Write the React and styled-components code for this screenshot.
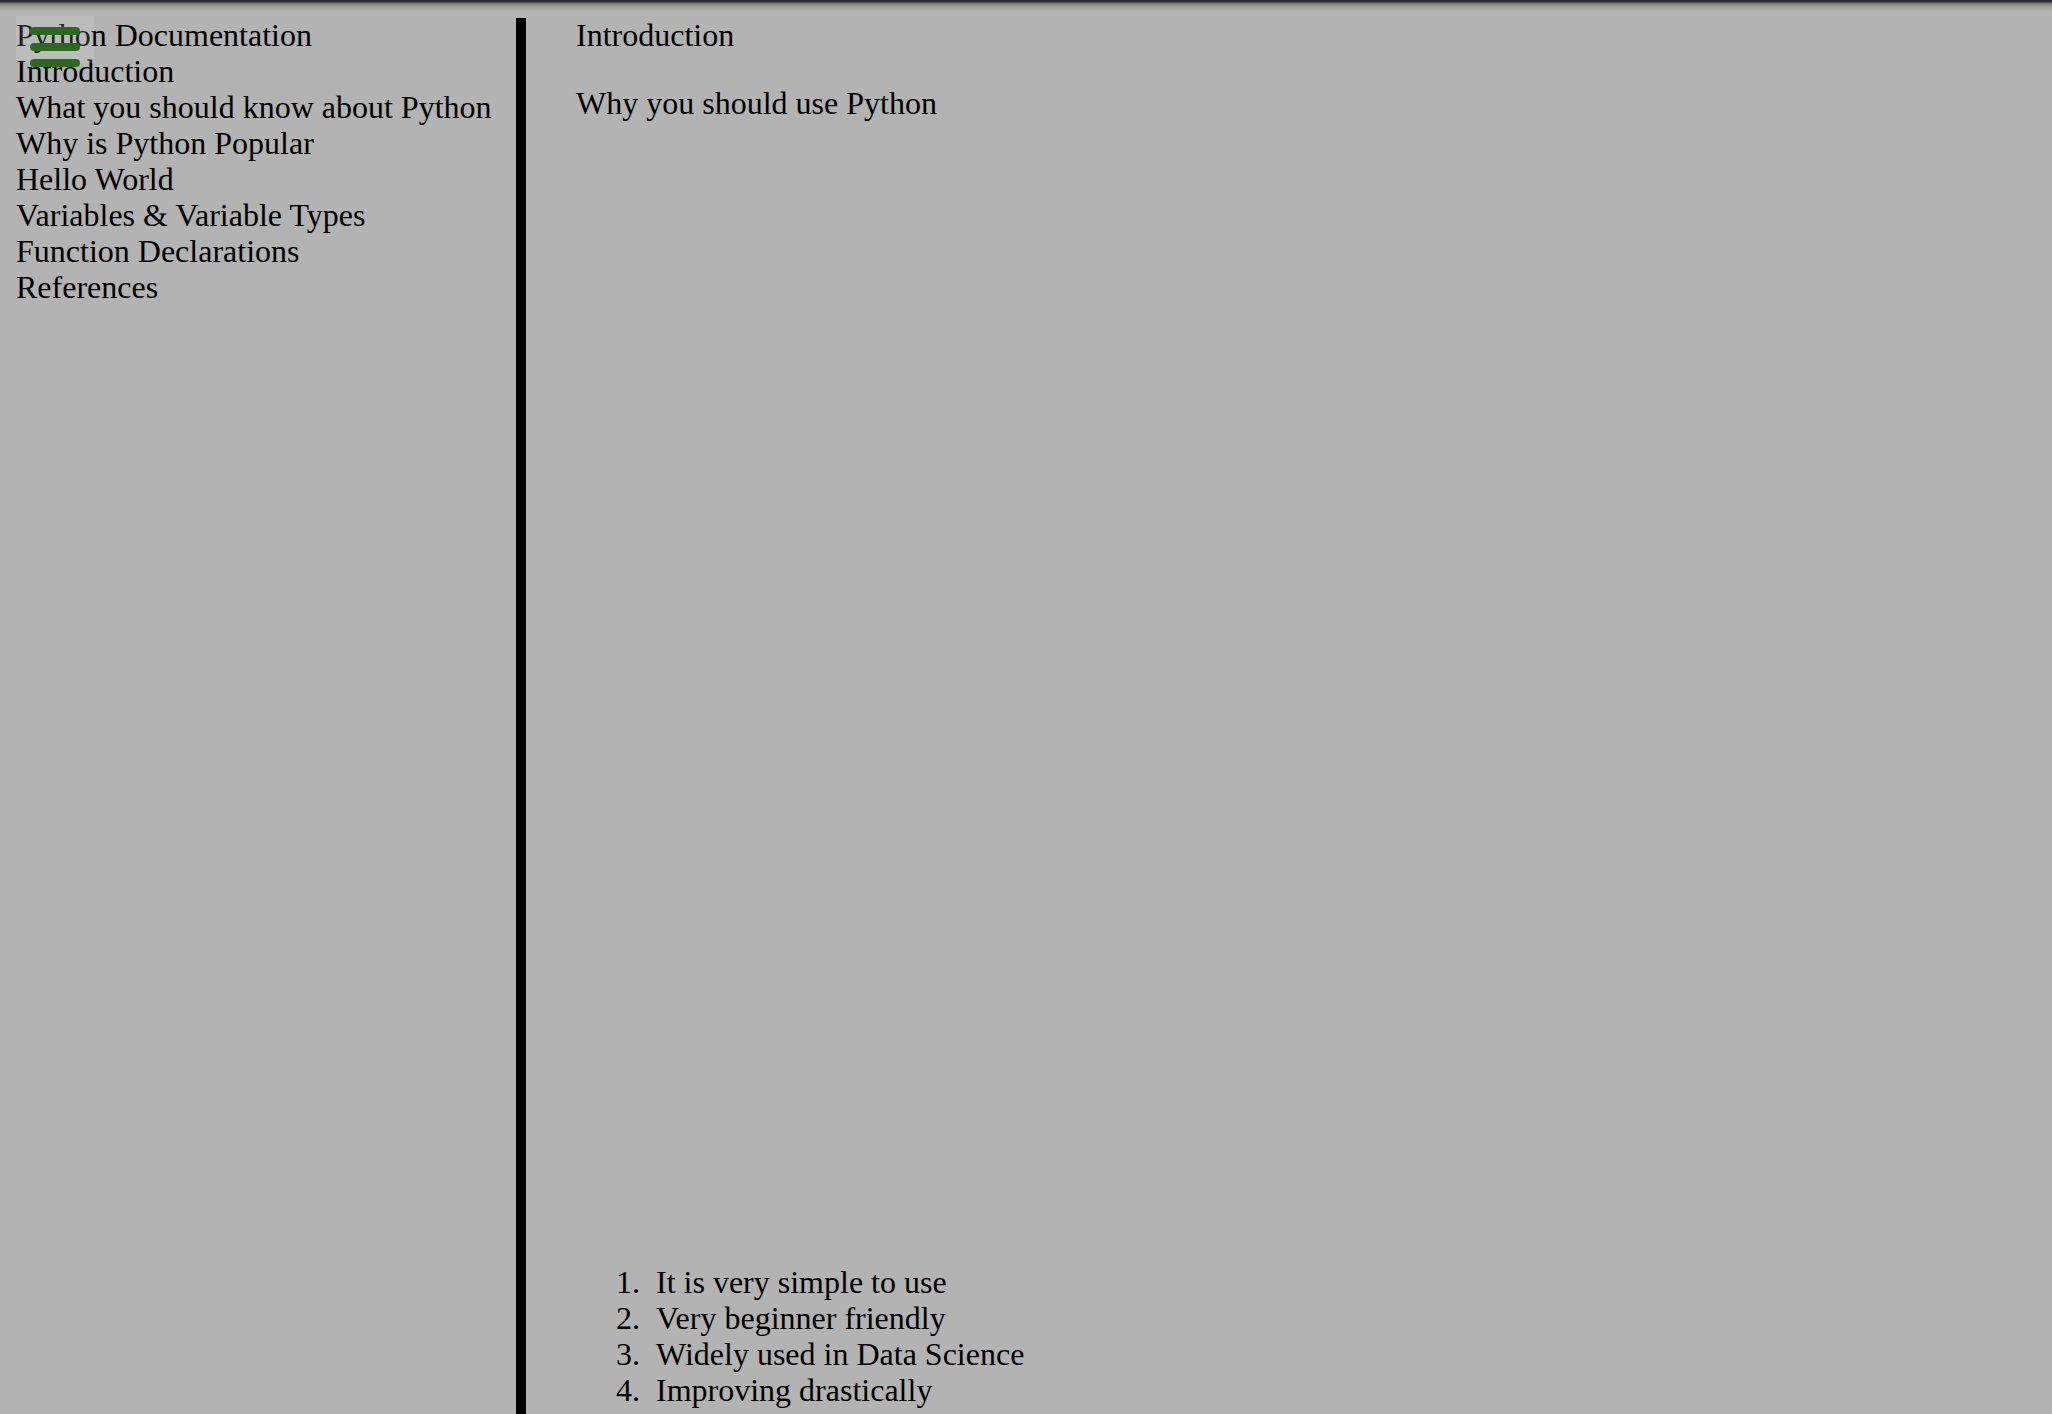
import styled, { createGlobalStyle } from "styled-components";

const GlobalStyle = createGlobalStyle`
    html {
        background: #b3b3b3;
    }
    body {
        margin: 0;
        font-family: "Liberation Serif", "Times New Roman", serif;
        font-size: 32px;
        line-height: 36px;
        color: #000;
    }
`

// the dark strip and its soft shade along the top edge
const Page = styled.div`
    position: relative;
    display: flex;
    min-height: 100vh;
    padding: 17px 0 0 16px;
    box-sizing: border-box;
    background:
        linear-gradient(#2b2b33 0, #2b2b33 2px, #77777b 3px, #a4a4a5 7px, #b3b3b3 12px) top / 100% 12px no-repeat,
        #b3b3b3;
`

const Sidebar = styled.nav`
    width: 500px;
    flex-shrink: 0;
`

const NavItem = styled.a`
    display: block;
    color: inherit;
    text-decoration: none;
`

const MenuButton = styled.button`
    position: absolute;
    left: 16px;
    top: 16px;
    width: 78px;
    height: 47px;
    padding: 11px 0 0 14px;
    border: none;
    background: rgba(255, 255, 255, 0.13);
    display: flex;
    flex-direction: column;
    gap: 8px;
    box-sizing: border-box;
    cursor: pointer;
`

const Bar = styled.span`
    display: block;
    width: 50px;
    height: 8px;
    flex-shrink: 0;
    border-radius: 4px;
    background: #2d6a1f;
`

const Main = styled.main`
    flex: 1;
    margin-top: 1px;
    border-left: 10px solid #000;
    padding-left: 50px;
`

const Title = styled.header`
    margin-top: -1px;
`

const Lead = styled.p`
    margin: 32px 0;
`

const Media = styled.div`
    height: 1079px;
`

const Reasons = styled.ol`
    margin: 32px 0;
    padding-left: 80px;

    li::marker {
        content: counter(list-item) ".\\00a0\\00a0";
    }
`

const links = [
    "Python Documentation",
    "Introduction",
    "What you should know about Python",
    "Why is Python Popular",
    "Hello World",
    "Variables & Variable Types",
    "Function Declarations",
    "References",
]

const reasons = [
    "It is very simple to use",
    "Very beginner friendly",
    "Widely used in Data Science",
    "Improving drastically",
]

export default function App() {
    return (
        <>
            <GlobalStyle />
            <Page>
                <Sidebar>
                    {links.map((link) => (
                        <NavItem key={link} href={"#" + link.replace(/\W+/g, "_")}>{link}</NavItem>
                    ))}
                </Sidebar>
                <MenuButton aria-label="menu">
                    <Bar />
                    <Bar />
                    <Bar />
                </MenuButton>
                <Main>
                    <Title>Introduction</Title>
                    <Lead>Why you should use Python</Lead>
                    <Media />
                    <Reasons>
                        {reasons.map((r) => (
                            <li key={r}>{r}</li>
                        ))}
                    </Reasons>
                </Main>
            </Page>
        </>
    )
}
